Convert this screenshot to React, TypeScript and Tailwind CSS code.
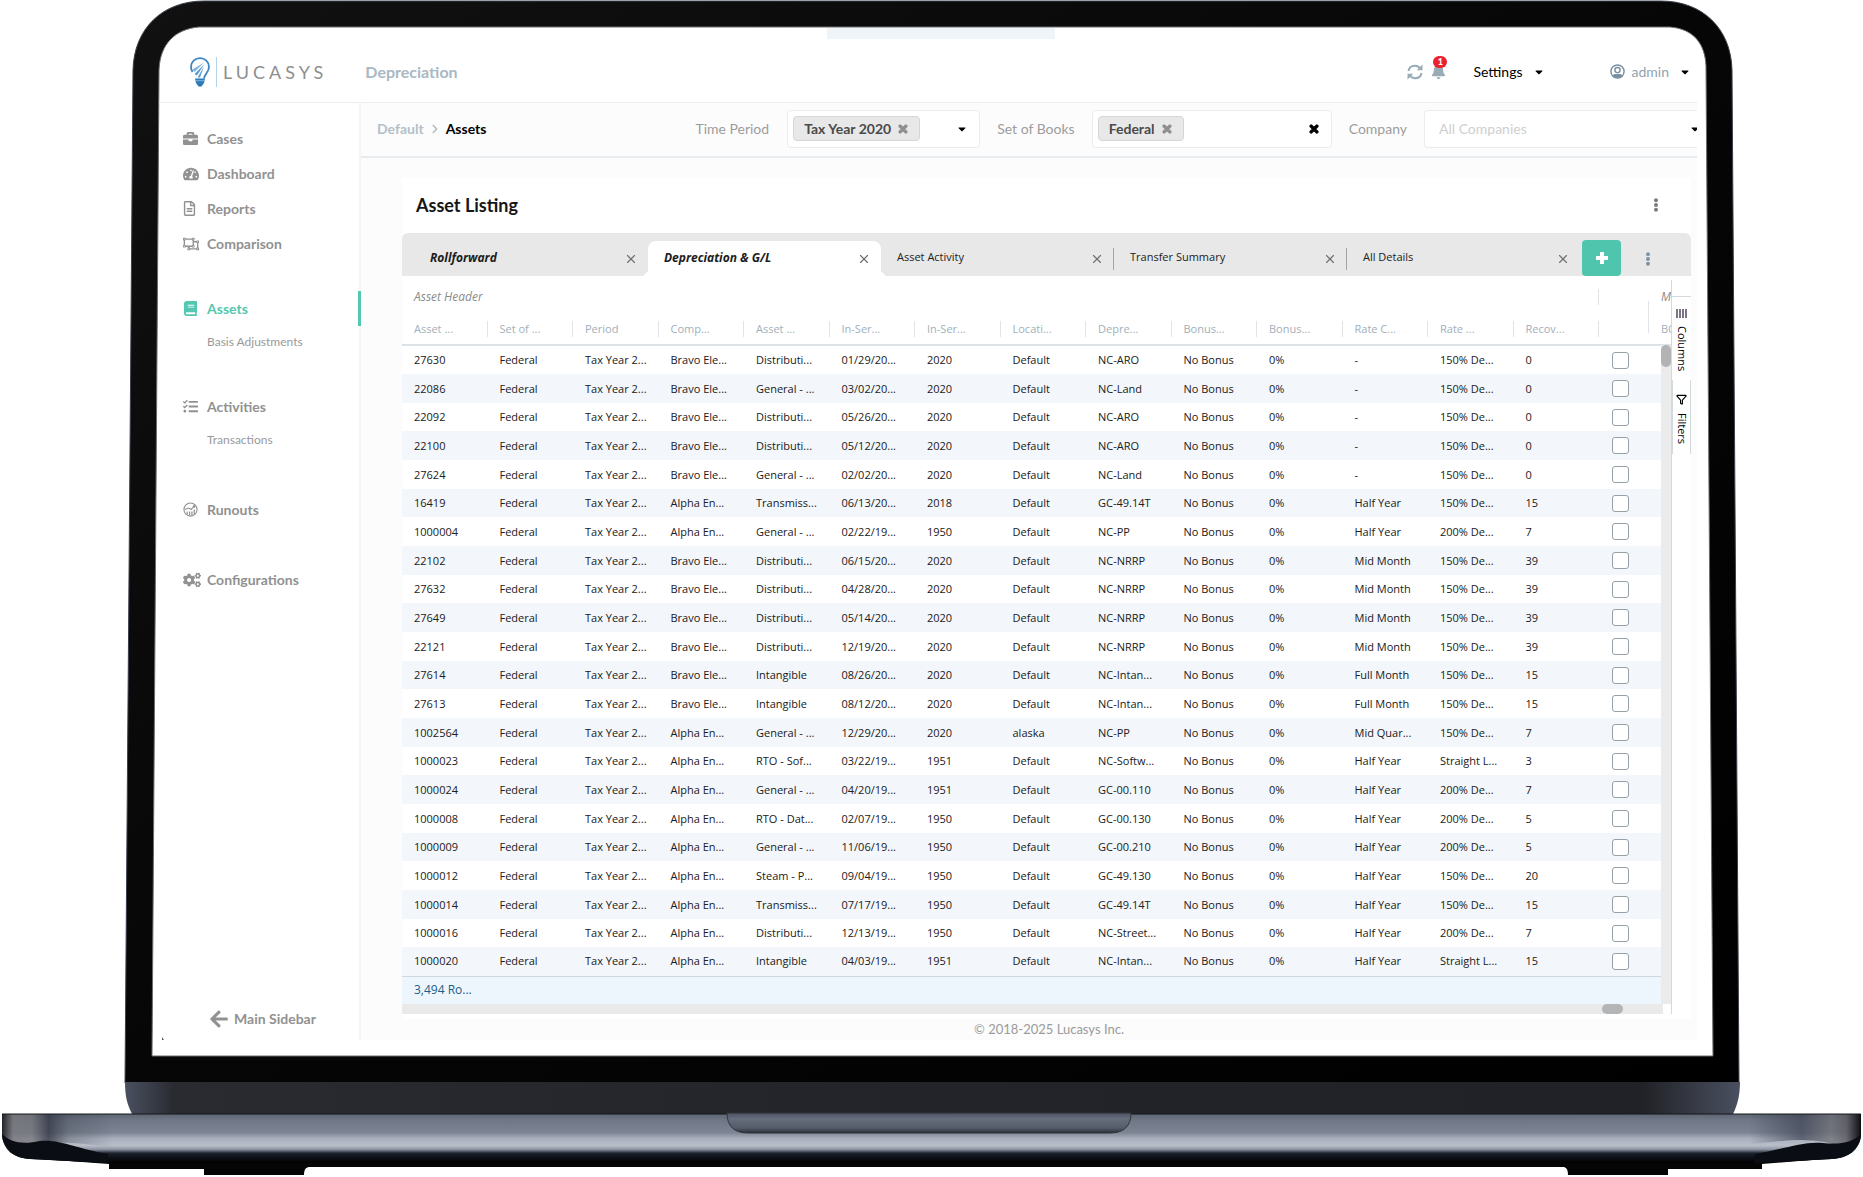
import type { ReactNode } from "react"
import {
  FaArrowLeft,
  FaBell,
  FaBook,
  FaBriefcase,
  FaCaretDown,
  FaChevronRight,
  FaCogs,
  FaEllipsisV,
  FaRegFileAlt,
  FaRegObjectUngroup,
  FaTachometerAlt,
  FaTasks,
  FaTimes,
} from "react-icons/fa"
import { Filter, X } from "lucide-react"

const COLUMNS = [
  "Asset ...",
  "Set of ...",
  "Period",
  "Comp...",
  "Asset ...",
  "In-Ser...",
  "In-Ser...",
  "Locati...",
  "Depre...",
  "Bonus...",
  "Bonus...",
  "Rate C...",
  "Rate ...",
  "Recov...",
]

// id, company, class, in-service date, vintage, location, depreciation group, convention, rate, recovery
const ASSETS = [
  ["27630", "Bravo Ele...", "Distributi...", "01/29/20...", "2020", "Default", "NC-ARO", "-", "150% De...", "0"],
  ["22086", "Bravo Ele...", "General - ...", "03/02/20...", "2020", "Default", "NC-Land", "-", "150% De...", "0"],
  ["22092", "Bravo Ele...", "Distributi...", "05/26/20...", "2020", "Default", "NC-ARO", "-", "150% De...", "0"],
  ["22100", "Bravo Ele...", "Distributi...", "05/12/20...", "2020", "Default", "NC-ARO", "-", "150% De...", "0"],
  ["27624", "Bravo Ele...", "General - ...", "02/02/20...", "2020", "Default", "NC-Land", "-", "150% De...", "0"],
  ["16419", "Alpha En...", "Transmiss...", "06/13/20...", "2018", "Default", "GC-49.14T", "Half Year", "150% De...", "15"],
  ["1000004", "Alpha En...", "General - ...", "02/22/19...", "1950", "Default", "NC-PP", "Half Year", "200% De...", "7"],
  ["22102", "Bravo Ele...", "Distributi...", "06/15/20...", "2020", "Default", "NC-NRRP", "Mid Month", "150% De...", "39"],
  ["27632", "Bravo Ele...", "Distributi...", "04/28/20...", "2020", "Default", "NC-NRRP", "Mid Month", "150% De...", "39"],
  ["27649", "Bravo Ele...", "Distributi...", "05/14/20...", "2020", "Default", "NC-NRRP", "Mid Month", "150% De...", "39"],
  ["22121", "Bravo Ele...", "Distributi...", "12/19/20...", "2020", "Default", "NC-NRRP", "Mid Month", "150% De...", "39"],
  ["27614", "Bravo Ele...", "Intangible", "08/26/20...", "2020", "Default", "NC-Intan...", "Full Month", "150% De...", "15"],
  ["27613", "Bravo Ele...", "Intangible", "08/12/20...", "2020", "Default", "NC-Intan...", "Full Month", "150% De...", "15"],
  ["1002564", "Alpha En...", "General - ...", "12/29/20...", "2020", "alaska", "NC-PP", "Mid Quar...", "150% De...", "7"],
  ["1000023", "Alpha En...", "RTO - Sof...", "03/22/19...", "1951", "Default", "NC-Softw...", "Half Year", "Straight L...", "3"],
  ["1000024", "Alpha En...", "General - ...", "04/20/19...", "1951", "Default", "GC-00.110", "Half Year", "200% De...", "7"],
  ["1000008", "Alpha En...", "RTO - Dat...", "02/07/19...", "1950", "Default", "GC-00.130", "Half Year", "200% De...", "5"],
  ["1000009", "Alpha En...", "General - ...", "11/06/19...", "1950", "Default", "GC-00.210", "Half Year", "200% De...", "5"],
  ["1000012", "Alpha En...", "Steam - P...", "09/04/19...", "1950", "Default", "GC-49.130", "Half Year", "150% De...", "20"],
  ["1000014", "Alpha En...", "Transmiss...", "07/17/19...", "1950", "Default", "GC-49.14T", "Half Year", "150% De...", "15"],
  ["1000016", "Alpha En...", "Distributi...", "12/13/19...", "1950", "Default", "NC-Street...", "Half Year", "200% De...", "7"],
  ["1000020", "Alpha En...", "Intangible", "04/03/19...", "1951", "Default", "NC-Intan...", "Half Year", "Straight L...", "15"],
]

function toCells(a: string[]) {
  return [a[0], "Federal", "Tax Year 2...", a[1], a[2], a[3], a[4], a[5], a[6], "No Bonus", "0%", a[7], a[8], a[9]]
}

function Laptop() {
  return (
    <svg
      viewBox="0 0 1863 1177"
      className="absolute inset-0 -z-10 h-full w-full"
      preserveAspectRatio="none"
      aria-hidden
    >
      <defs>
        <linearGradient id="bezel" x1="0" x2="1" y1="0" y2="1">
          <stop offset="0" stopColor="#111111" />
          <stop offset="0.5" stopColor="#060606" />
          <stop offset="1" stopColor="#000000" />
        </linearGradient>
        <linearGradient id="hinge" x1="0" x2="1">
          <stop offset="0" stopColor="#4a5060" />
          <stop offset="0.015" stopColor="#3a3e4a" />
          <stop offset="0.03" stopColor="#2a2b31" />
          <stop offset="0.5" stopColor="#232429" />
          <stop offset="0.94" stopColor="#212227" />
          <stop offset="1" stopColor="#4a5060" />
        </linearGradient>
        <linearGradient id="deck" x1="0" x2="0" y1="0" y2="1">
          <stop offset="0" stopColor="#5d6472" />
          <stop offset="0.12" stopColor="#6f7786" />
          <stop offset="0.38" stopColor="#7d8594" />
          <stop offset="0.5" stopColor="#a9afbc" />
          <stop offset="0.64" stopColor="#b9bec9" />
          <stop offset="0.72" stopColor="#8f96a5" />
          <stop offset="0.8" stopColor="#1c222c" />
          <stop offset="0.9" stopColor="#0b0f15" />
          <stop offset="1" stopColor="#000000" />
        </linearGradient>
        <linearGradient id="ends" x1="0" x2="1">
          <stop offset="0" stopColor="#16181d" stopOpacity="0.9" />
          <stop offset="0.006" stopColor="#77777b" stopOpacity="0.8" />
          <stop offset="0.016" stopColor="#75757a" stopOpacity="0.7" />
          <stop offset="0.025" stopColor="#343845" stopOpacity="0.8" />
          <stop offset="0.036" stopColor="#3a3f4c" stopOpacity="0.3" />
          <stop offset="0.06" stopColor="#3a3f4c" stopOpacity="0" />
          <stop offset="0.94" stopColor="#3a3f4c" stopOpacity="0" />
          <stop offset="0.968" stopColor="#3f4554" stopOpacity="0.7" />
          <stop offset="0.984" stopColor="#6e6e74" stopOpacity="0.7" />
          <stop offset="0.992" stopColor="#5a5a60" stopOpacity="0.8" />
          <stop offset="1" stopColor="#0b0c0f" />
        </linearGradient>
        <linearGradient id="notch" x1="0" x2="0" y1="0" y2="1">
          <stop offset="0" stopColor="#4d5362" />
          <stop offset="0.3" stopColor="#666d7c" />
          <stop offset="0.75" stopColor="#555b69" />
          <stop offset="1" stopColor="#2b2f38" />
        </linearGradient>
      </defs>
      <path
        d="M204 1H1661C1702 1 1731 28 1732 70L1739 1083H125L133 70C134 28 163 1 204 1Z"
        fill="url(#bezel)"
        stroke="#3b414c"
      />
      <path
        d="M199 27H1670C1694 29 1705 44 1706 66L1713 1056H152L159 70C160 43 176 29 199 27Z"
        fill="#ffffff"
        stroke="#6b6b6b"
      />
      <rect x="827" y="28" width="228" height="11" fill="#eef4f7" />
      <path d="M162 1037L164 1040H162Z" fill="#555555" />
      <path d="M125 1082H1740C1740 1096 1737 1106 1733 1114H132C127 1104 125 1096 125 1082Z" fill="url(#hinge)" />
      <path
        d="M28 1158L109 1164V1169H204V1175H304C304 1169 306 1167 310 1167H1563C1566 1167 1568 1169 1568 1175H1668V1169H1762V1164L1835 1158Z"
        fill="#050505"
      />
      <path
        d="M2 1114H1861V1136C1860 1150 1848 1158 1832 1159L1762 1163H109L30 1159C14 1158 3 1150 2 1136Z"
        fill="url(#deck)"
      />
      <path
        d="M2 1114H1861V1136C1860 1144 1856 1149 1851 1150C1810 1134 1790 1140 1700 1150H150C80 1146 70 1136 12 1150C7 1149 3 1144 2 1136Z"
        fill="url(#ends)"
      />
      <path d="M2 1134C10 1142 22 1145 40 1141C60 1139 78 1149 108 1154V1163L30 1159C14 1158 3 1150 2 1134Z" fill="#0a0e14" />
      <path
        d="M1861 1134C1853 1142 1841 1145 1823 1143C1803 1141 1785 1149 1755 1154V1163L1832 1159C1848 1158 1860 1150 1861 1134Z"
        fill="#0a0e14"
      />
      <path d="M2 1114H1861" stroke="#15171b" strokeWidth="1" />
      <path
        d="M727 1113H1131C1131 1126 1124 1133 1110 1133H748C734 1133 727 1126 727 1113Z"
        fill="url(#notch)"
        stroke="#2f333c"
      />
    </svg>
  )
}

function Logo() {
  return (
    <a href="#home" className="flex items-center" aria-label="Lucasys home">
      <svg viewBox="0 0 20 30" className="h-[30px] w-5" fill="none" aria-hidden>
        <path
          d="M2.500 15C1.500 13.500 1 12 1 10C1 5 5 1.200 10 1.200S19 5 19 10C19 15 14.500 17 14 21.500"
          stroke="#3b86c4"
          strokeWidth="1.800"
        />
        <path d="M2.500 12.500L14 5.500L4.500 15Z" fill="#7fb2dc" />
        <path d="M4.500 17L14.500 7L7 18.500Z" fill="#5c9bd0" />
        <path d="M7.500 20.500L14 9.500L10 20.500Z" fill="#5c9bd0" />
        <path d="M5 21.500H15L14 26L11.500 29.500H8.500L6 26Z" fill="#2b7bbd" />
        <path d="M5.500 23.700H14.500" stroke="#a9cbe6" strokeWidth="0.700" />
      </svg>
      <span className="ml-[6px] h-[30px] w-px bg-[#b4d3ea]" />
      <span className="ml-[6px] text-lg leading-6 tracking-[4px] text-[#8e8e8e]">LUCASYS</span>
    </a>
  )
}

function RefreshIcon() {
  return (
    <svg viewBox="0 0 16 16" className="size-4" fill="none" stroke="currentColor" strokeWidth="2" aria-hidden>
      <path d="M1.500 7C2 3.800 4.700 1.800 8 1.800C10.400 1.800 12.200 3 13.500 4.800" />
      <path d="M14.500 9C14 12.200 11.300 14.200 8 14.200C5.600 14.200 3.800 13 2.500 11.200" />
      <path d="M15.500 0.500V6.300H9.700Z" fill="currentColor" stroke="none" />
      <path d="M0.500 15.500V9.700H6.300Z" fill="currentColor" stroke="none" />
    </svg>
  )
}

function UserIcon() {
  return (
    <svg viewBox="0 0 16 16" className="mr-[7px] size-[15px] text-[#7890a1]" aria-hidden>
      <circle cx="8" cy="8" r="7" fill="none" stroke="currentColor" strokeWidth="1.500" />
      <circle cx="8" cy="6.500" r="2.800" fill="none" stroke="currentColor" strokeWidth="1.500" />
      <path d="M2.500 12.500C4 10.500 6 10.800 8 10.800S12 10.500 13.500 12.500C12 14.500 10 15 8 15S4 14.500 2.500 12.500Z" fill="currentColor" />
    </svg>
  )
}

function TopBar() {
  return (
    <header className="flex h-[76px] items-center border-b border-[#eceff1] pt-[14px] pr-[6px] pl-[31px]">
      <Logo />
      <h1 className="ml-[38px] text-base font-bold text-[#a9b8c3]">Depreciation</h1>
      <div className="ml-auto flex items-center text-sm">
        <button type="button" aria-label="Refresh" className="text-[#9aabb8]">
          <RefreshIcon />
        </button>
        <button type="button" aria-label="Notifications" className="relative ml-2 text-[#9aabb8]">
          <FaBell className="size-[15px]" />
          <span className="absolute -top-2 left-[2px] flex h-3 w-[14px] items-center justify-center rounded-full bg-[#e9222b] text-[9px] leading-3 font-black text-white">
            1
          </span>
        </button>
        <button type="button" className="ml-[27px] flex items-center text-black">
          Settings
          <FaCaretDown className="ml-[10px] size-3" />
        </button>
        <button type="button" className="ml-[65px] flex items-center text-[#8fa3b1]">
          <UserIcon />
          admin
          <FaCaretDown className="ml-[10px] size-3 text-black" />
        </button>
      </div>
    </header>
  )
}

type NavItemProps = { icon: ReactNode; label: string; active?: boolean; className?: string }

function NavItem({ icon, label, active, className = "" }: NavItemProps) {
  return (
    <a
      href="#nav"
      className={`flex h-[35px] items-center pl-6 text-sm font-bold ${
        active ? "-mr-[2px] border-r-[3px] border-[#52c8b0] text-[#52c8b0]" : "text-[#919191]"
      } ${className}`}
    >
      <span className="flex w-6 text-[15px]">{icon}</span>
      {label}
    </a>
  )
}

function SubItem({ label }: { label: string }) {
  return (
    <a href="#sub" className="flex h-8 items-center pl-12 text-xs text-[#999999]">
      {label}
    </a>
  )
}

function RunoutsIcon() {
  return (
    <svg viewBox="0 0 16 16" className="size-[15px]" fill="none" stroke="currentColor" aria-hidden>
      <circle cx="8" cy="8" r="7" strokeWidth="1.200" />
      <path d="M2 8L6 6.500L8.500 8L12.500 4M10.500 4H12.500V6" strokeWidth="1.200" />
      <path d="M4.500 10V13M7 10V14.500M9.500 10V14.500M12 8V13" strokeWidth="1.300" />
    </svg>
  )
}

function Sidebar() {
  return (
    <nav className="flex w-[202px] shrink-0 flex-col border-r-2 border-[#f3f5f6] pt-[18px] pb-[5px]">
      <NavItem icon={<FaBriefcase />} label="Cases" />
      <NavItem icon={<FaTachometerAlt className="size-4" />} label="Dashboard" />
      <NavItem icon={<FaRegFileAlt className="-ml-px" />} label="Reports" />
      <NavItem icon={<FaRegObjectUngroup className="size-4" />} label="Comparison" />
      <NavItem icon={<FaBook />} label="Assets" active className="mt-[30px]" />
      <SubItem label="Basis Adjustments" />
      <NavItem icon={<FaTasks />} label="Activities" className="mt-[31px]" />
      <SubItem label="Transactions" />
      <NavItem icon={<RunoutsIcon />} label="Runouts" className="mt-9" />
      <NavItem icon={<FaCogs className="size-[18px]" />} label="Configurations" className="mt-[35px]" />
      <a href="#main" className="mt-auto flex h-8 items-center pl-[50px] text-sm font-bold text-[#919191]">
        <FaArrowLeft className="mr-[5px] size-5" />
        Main Sidebar
      </a>
    </nav>
  )
}

function Chip({ label }: { label: string }) {
  return (
    <span className="flex h-[25px] items-center gap-[6px] rounded border border-[#d6d6d6] bg-[#e8e8e8] px-[10px] text-sm font-bold whitespace-nowrap text-[#4a4a4a]">
      {label}
      <button type="button" aria-label={`Remove ${label}`} className="text-[#8f8f8f]">
        <FaTimes className="size-3 stroke-current stroke-[50]" />
      </button>
    </span>
  )
}

function FilterBar() {
  return (
    <div className="flex h-[55px] items-center overflow-hidden border-b-2 border-[#e9ecee] pb-[2px] pl-4 text-sm">
      <a href="#default" className="font-bold text-[#b3c0c9]">
        Default
      </a>
      <FaChevronRight className="mx-[6px] size-[10px] text-[#b3c0c9]" />
      <span className="font-bold text-black">Assets</span>
      <label htmlFor="period" className="ml-auto text-[#9c9c9c]">
        Time Period
      </label>
      <div className="ml-[18px] flex h-[38px] w-[193px] shrink-0 items-center rounded border border-[#ececec] bg-white px-[5px]">
        <Chip label="Tax Year 2020" />
        <input id="period" className="w-0 min-w-0 flex-1 outline-none" />
        <button type="button" aria-label="Open periods" className="mr-[6px]">
          <FaCaretDown className="size-3" />
        </button>
      </div>
      <label htmlFor="books" className="ml-[17px] shrink-0 text-[#9c9c9c]">
        Set of Books
      </label>
      <div className="ml-[17px] flex h-[38px] w-60 shrink-0 items-center rounded border border-[#ececec] bg-white px-[5px]">
        <Chip label="Federal" />
        <input id="books" className="w-0 min-w-0 flex-1 outline-none" />
        <button type="button" aria-label="Clear books" className="mr-[6px]">
          <FaTimes className="size-3 stroke-current stroke-[50]" />
        </button>
      </div>
      <label htmlFor="company" className="ml-[17px] shrink-0 text-[#9c9c9c]">
        Company
      </label>
      <div className="ml-[17px] flex h-[38px] w-[273px] shrink-0 items-center overflow-hidden rounded-l border border-r-0 border-[#ececec] bg-white">
        <select id="company" className="w-full appearance-none pl-[14px] text-[#cfcfcf] outline-none">
          <option>All Companies</option>
        </select>
        <FaCaretDown className="-mr-1 size-3 shrink-0" />
      </div>
    </div>
  )
}

type TabProps = { label: string; edited?: boolean; active?: boolean; first?: boolean; divider?: boolean }

function Tab({ label, edited, active, first, divider }: TabProps) {
  const shape = active
    ? "relative rounded-t-lg bg-white before:absolute before:bottom-0 before:-left-2 before:size-2 before:rounded-br-lg before:shadow-[4px_4px_0_0_white] after:absolute after:-right-2 after:bottom-0 after:size-2 after:rounded-bl-lg after:shadow-[-4px_4px_0_0_white]"
    : ""
  return (
    <div
      className={`flex h-[35px] items-center justify-between pr-[10px] ${
        first ? "w-[246px] pl-7" : "w-[233px] pl-4"
      } ${shape}`}
    >
      <button
        type="button"
        role="tab"
        aria-selected={!!active}
        className={`pb-[2px] ${edited ? "text-xs font-bold text-[#1c1c1c] italic" : "text-[11px] text-[#222222]"}`}
      >
        {label}
      </button>
      <div className="flex items-center">
        <button type="button" aria-label={`Close ${label}`} className="text-[#6f6f6f]">
          <X className="size-[14px]" />
        </button>
        {divider && <span className="-mr-[10px] ml-[9px] h-[22px] w-px bg-[#a5a5a5]" />}
      </div>
    </div>
  )
}

function TabBar() {
  return (
    <div
      role="tablist"
      className="flex h-[43px] items-end rounded-t-md bg-[#e8e8e8] font-['Open_Sans','Noto_Sans',sans-serif]"
    >
      <Tab label="Rollforward" edited first />
      <Tab label="Depreciation & G/L" edited active />
      <Tab label="Asset Activity" divider />
      <Tab label="Transfer Summary" divider />
      <Tab label="All Details" />
      <button
        type="button"
        aria-label="Add tab"
        className="ml-[2px] flex h-9 w-[39px] items-center justify-center rounded bg-[#4fc5ad] text-white"
      >
        <svg viewBox="0 0 14 14" className="size-[14px]" aria-hidden>
          <path d="M7 1V13M1 7H13" stroke="currentColor" strokeWidth="4" />
        </svg>
      </button>
      <button type="button" aria-label="Tab options" className="ml-5 flex h-[35px] items-center text-[#7d93a3]">
        <FaEllipsisV className="size-[14px]" />
      </button>
    </div>
  )
}

function AssetTable() {
  return (
    <table className="w-full table-fixed border-collapse text-left">
      <colgroup>
        {COLUMNS.map((_, i) => (
          <col key={i} />
        ))}
        <col className="w-[50px]" />
        <col className="w-[22px]" />
      </colgroup>
      <thead className="text-[#9fb0ba]">
        <tr className="h-[37px]">
          <th colSpan={14} className="py-0 pt-1 pl-3 text-xs font-normal text-[#8b8b8b] italic">
            <div className="flex items-center justify-between">
              Asset Header
              <span className="h-4 w-px bg-[#dfe4e8]" />
            </div>
          </th>
          <th />
          <th className="overflow-hidden p-0 pt-1 pl-3 text-xs font-normal text-[#8b8b8b] italic">M</th>
        </tr>
        <tr className="h-8 border-b-2 border-[#dde2e6]">
          {COLUMNS.map((name, i) => (
            <th key={i} className="py-0 pl-3 font-normal">
              <div className="flex items-center justify-between whitespace-nowrap">
                {name}
                <span className="h-4 w-px bg-[#dfe4e8]" />
              </div>
            </th>
          ))}
          <th className="p-0">
            <span className="-mt-6 ml-auto block h-8 w-px bg-[#dfe4e8]" />
          </th>
          <th className="overflow-hidden p-0 pl-3 font-normal whitespace-nowrap">BO</th>
        </tr>
      </thead>
      <tbody className="text-[#202020]">
        {ASSETS.map((asset) => (
          <tr key={asset[0]} className="h-[29px] even:bg-[#f3f7fb] nth-[3n]:h-7">
            {toCells(asset).map((cell, i) => (
              <td key={i} className="p-0 pl-3 whitespace-nowrap">
                {cell}
              </td>
            ))}
            <td className="p-0 pl-[13px]">
              <input
                type="checkbox"
                aria-label={`Select asset ${asset[0]}`}
                className="block size-[17px] appearance-none rounded-[3px] border border-[#95a1a6] bg-white"
              />
            </td>
            <td />
          </tr>
        ))}
      </tbody>
      <tfoot>
        <tr className="h-7 border-t border-[#cfd8de] bg-[#edf5fd]">
          <td colSpan={16} className="p-0 pl-3 text-xs text-[#235d85]">
            3,494 Ro...
          </td>
        </tr>
      </tfoot>
    </table>
  )
}

function ToolPanel() {
  return (
    <aside className="mt-1 w-5 shrink-0 border-l border-[#d3dade] pt-4">
      <button
        type="button"
        className="flex h-[84px] w-full items-center gap-2 border-t border-[#d3dade] pt-3 [writing-mode:vertical-rl]"
      >
        <svg viewBox="0 0 11 9" className="h-[9px] w-[11px]" aria-hidden>
          <path d="M1 0V9M4 0V9M7 0V9M10 0V9" stroke="#4a3a55" strokeWidth="1.400" />
        </svg>
        Columns
      </button>
      <button
        type="button"
        className="flex h-[74px] w-full items-center gap-2 border-y border-[#d3dade] pt-[14px] [writing-mode:vertical-rl]"
      >
        <Filter className="size-[11px]" strokeWidth={2.5} />
        Filters
      </button>
    </aside>
  )
}

export default function App() {
  return (
    <div className="relative isolate min-w-[1280px] bg-white pt-[27px] pr-[166px] pb-[137px] pl-[159px] font-[Lato,sans-serif]">
      <Laptop />
      <TopBar />
      <div className="flex">
        <Sidebar />
        <div className="flex min-w-0 flex-1 flex-col bg-[#fcfcfc]">
          <FilterBar />
          <main className="mt-5 mr-[6px] ml-[41px] bg-white pb-[5px]">
            <div className="flex h-[55px] items-center justify-between pr-7 pb-[2px] pl-[14px]">
              <h2 className="text-lg font-bold text-[#161616]">Asset Listing</h2>
              <button type="button" aria-label="Listing options" className="text-[#7b7b7b]">
                <FaEllipsisV className="size-[14px]" />
              </button>
            </div>
            <TabBar />
            <div className="flex font-['Open_Sans','Noto_Sans',sans-serif] text-[11px] leading-4">
              <div className="relative min-w-0 flex-1 overflow-hidden">
                <AssetTable />
                <div className="absolute top-[69px] right-0 bottom-[10px] w-[10px] bg-[#ebebeb]">
                  <div className="h-[22px] rounded-full bg-[#b3b3b3]" />
                </div>
                <div className="mr-2 h-[10px] bg-[#eaeaea] pr-10">
                  <div className="ml-auto h-full w-[21px] rounded-full bg-[#b3b5b6]" />
                </div>
              </div>
              <ToolPanel />
            </div>
          </main>
          <footer className="flex h-[21px] items-center justify-center pl-10 text-[13px] text-[#9a9a9a]">
            © 2018-2025 Lucasys Inc.
          </footer>
        </div>
      </div>
    </div>
  )
}
